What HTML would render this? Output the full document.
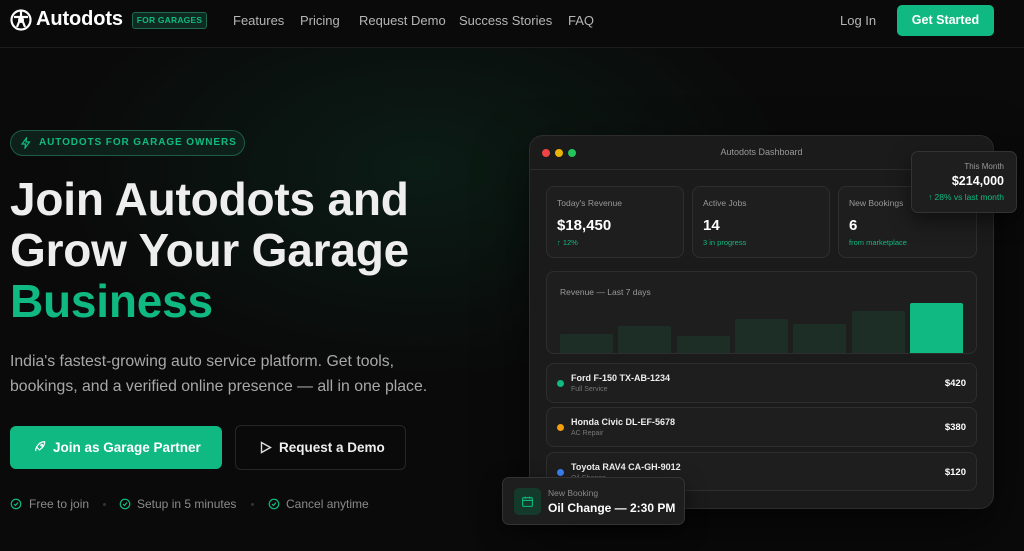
<!DOCTYPE html>
<html><head><meta charset="utf-8"><style>
*{margin:0;padding:0;box-sizing:border-box}
body{width:1024px;height:551px;overflow:hidden;background:#0a0a0a;font-family:"Liberation Sans",sans-serif;color:#fff;position:relative}
.bg{position:absolute;left:0;top:48px;width:1024px;height:503px;background:radial-gradient(ellipse 520px 300px at 420px 120px,rgba(16,120,80,0.16),transparent 70%)}
.a{position:absolute}
nav .l{position:absolute;top:13px;font-size:13px;color:#b5b5b5}
.card{position:absolute;background:#1e1e1e;border:1px solid #2e2e2e;border-radius:8px}
.sl{font-size:8.5px;color:#999;position:absolute;left:10px;top:11px}
.sv{font-size:15px;font-weight:bold;position:absolute;left:10px;top:30px}
.sg{font-size:7.5px;color:#10b981;position:absolute;left:10px;top:51px}
.bar{position:absolute;bottom:0;width:53px;background:#1d2e27;border-radius:2px 2px 0 0}
.row .d{position:absolute;left:10px;top:16px;width:7px;height:7px;border-radius:50%}
.row .t{position:absolute;left:24px;top:9px;font-size:9px;font-weight:bold;color:#eee}
.row .s{position:absolute;left:24px;top:22px;font-size:7px;color:#777}
.row .p{position:absolute;right:10px;top:14px;font-size:9.5px;font-weight:bold}
.ck{position:absolute;top:497px;font-size:12px;color:#8a8a8a;white-space:nowrap}
.ci{position:absolute;top:498px}
.dt{position:absolute;top:503px;width:3px;height:3px;border-radius:50%;background:#333}
</style></head><body>
<div class="bg"></div>
<nav>
<svg class="a" style="left:10px;top:9px" width="22" height="22" viewBox="0 0 22 22"><circle cx="11" cy="11" r="9.5" fill="none" stroke="#fff" stroke-width="2.2"/><path d="M11 2 L11 8 M11 8 L4 8 M11 8 L18 8 M7 18 L11 8 L15 18" stroke="#fff" stroke-width="2.2" fill="none"/><circle cx="11" cy="11" r="3" fill="#fff"/></svg>
<div class="a" style="left:36px;top:8px;font-size:20px;font-weight:bold;letter-spacing:-0.1px">Autodots</div>
<div class="a" style="left:132px;top:12px;width:75px;height:17px;border:1px solid #1f6b4d;background:#0f2a20;border-radius:3px;color:#10b981;font-size:8.5px;font-weight:bold;text-align:center;line-height:15px;letter-spacing:0.2px">FOR GARAGES</div>
<span class="l" style="left:233px">Features</span><span class="l" style="left:300px">Pricing</span><span class="l" style="left:359px">Request Demo</span><span class="l" style="left:459px">Success Stories</span><span class="l" style="left:568px">FAQ</span>
<span class="l" style="left:840px">Log In</span>
<div class="a" style="left:897px;top:5px;width:97px;height:31px;background:#10b981;border-radius:5px;font-size:12.5px;font-weight:bold;text-align:center;line-height:31px">Get Started</div>
</nav>
<div class="a" style="left:0;top:47px;width:1024px;height:1px;background:#1c1c1c"></div>
<div class="a" style="left:10px;top:130px;width:235px;height:26px;border:1px solid #1d5c43;background:#0d211a;border-radius:13px;color:#10b981;font-size:10px;font-weight:bold;letter-spacing:0.9px;line-height:24px;padding-left:28px">AUTODOTS FOR GARAGE OWNERS</div>
<svg class="a" style="left:20px;top:137px" width="12" height="12" viewBox="0 0 24 24"><path d="M13 2L4 14h7l-1 8 9-12h-7z" fill="none" stroke="#10b981" stroke-width="2.4"/></svg>
<div class="a" style="left:10px;top:174px;font-size:46px;font-weight:bold;line-height:51px;letter-spacing:-0.2px;color:#eee">Join Autodots and<br>Grow Your Garage<br><span style="color:#10b981">Business</span></div>
<div class="a" style="left:10px;top:350px;font-size:15.8px;line-height:24.5px;color:#a8a8a8">India's fastest-growing auto service platform. Get tools,<br>bookings, and a verified online presence — all in one place.</div>
<div class="a" style="left:10px;top:426px;width:212px;height:43px;background:#10b981;border-radius:6px;font-size:13.5px;font-weight:bold;line-height:43px;padding-left:43px">Join as Garage Partner</div>
<svg class="a" style="left:33px;top:440px" width="14" height="14" viewBox="0 0 24 24" fill="none" stroke="#fff" stroke-width="2"><path d="M5 19c-1-3 0-5 2-6M9 15l-3-3 4-5c3-3 7-4 10-4 0 3-1 7-4 10l-5 4z"/><circle cx="15" cy="9" r="1.5"/></svg>
<div class="a" style="left:235px;top:425px;width:171px;height:45px;border:1px solid #262626;border-radius:6px;font-size:13.5px;font-weight:bold;line-height:43px;padding-left:43px;color:#eee">Request a Demo</div>
<svg class="a" style="left:260px;top:441px" width="12" height="13" viewBox="0 0 12 13"><path d="M1.5 1.5L10.5 6.5 1.5 11.5z" fill="none" stroke="#ddd" stroke-width="1.4"/></svg>
<svg class="ci" style="left:10px" width="12" height="12" viewBox="0 0 24 24" fill="none" stroke="#10b981" stroke-width="2.4"><circle cx="12" cy="12" r="9.5"/><path d="M8 12l3 3 5-6"/></svg>
<span class="ck" style="left:29px">Free to join</span><div class="dt" style="left:103px"></div>
<svg class="ci" style="left:119px" width="12" height="12" viewBox="0 0 24 24" fill="none" stroke="#10b981" stroke-width="2.4"><circle cx="12" cy="12" r="9.5"/><path d="M8 12l3 3 5-6"/></svg>
<span class="ck" style="left:137px">Setup in 5 minutes</span><div class="dt" style="left:251px"></div>
<svg class="ci" style="left:268px" width="12" height="12" viewBox="0 0 24 24" fill="none" stroke="#10b981" stroke-width="2.4"><circle cx="12" cy="12" r="9.5"/><path d="M8 12l3 3 5-6"/></svg>
<span class="ck" style="left:286px">Cancel anytime</span>

<div class="a" style="left:529px;top:135px;width:465px;height:374px;background:#1b1b1b;border:1px solid #2c2c2c;border-radius:14px;box-shadow:0 20px 50px rgba(0,0,0,.6)">
 <div class="a" style="left:0;top:33px;width:463px;height:1px;background:#2c2c2c"></div>
 <div class="a" style="left:12px;top:13px;width:8px;height:8px;border-radius:50%;background:#ef4444"></div>
 <div class="a" style="left:25px;top:13px;width:8px;height:8px;border-radius:50%;background:#eab308"></div>
 <div class="a" style="left:38px;top:13px;width:8px;height:8px;border-radius:50%;background:#22c55e"></div>
 <div class="a" style="left:0;width:463px;top:11px;text-align:center;font-size:9px;color:#999">Autodots Dashboard</div>
 <div class="card" style="left:16px;top:50px;width:138px;height:72px"><div class="sl">Today's Revenue</div><div class="sv">$18,450</div><div class="sg">↑ 12%</div></div>
 <div class="card" style="left:162px;top:50px;width:138px;height:72px"><div class="sl">Active Jobs</div><div class="sv">14</div><div class="sg">3 in progress</div></div>
 <div class="card" style="left:308px;top:50px;width:139px;height:72px"><div class="sl">New Bookings</div><div class="sv">6</div><div class="sg">from marketplace</div></div>
 <div class="card" style="left:16px;top:135px;width:431px;height:83px;overflow:hidden"><div class="sl" style="left:13px;top:15px">Revenue — Last 7 days</div>
  <div class="bar" style="left:13px;height:19px"></div><div class="bar" style="left:71px;height:27px"></div><div class="bar" style="left:130px;height:17px"></div><div class="bar" style="left:188px;height:34px"></div><div class="bar" style="left:246px;height:29px"></div><div class="bar" style="left:305px;height:42px"></div><div class="bar" style="left:363px;height:50px;background:#10b981"></div></div>
 <div class="card row" style="left:16px;top:227px;width:431px;height:40px"><div class="d" style="background:#10b981"></div><div class="t">Ford F-150 TX-AB-1234</div><div class="s">Full Service</div><div class="p">$420</div></div>
 <div class="card row" style="left:16px;top:271px;width:431px;height:40px"><div class="d" style="background:#f59e0b"></div><div class="t">Honda Civic DL-EF-5678</div><div class="s">AC Repair</div><div class="p">$380</div></div>
 <div class="card row" style="left:16px;top:316px;width:431px;height:39px"><div class="d" style="background:#3b82f6"></div><div class="t">Toyota RAV4 CA-GH-9012</div><div class="s">Oil Change</div><div class="p">$120</div></div>
</div>
<div class="a" style="left:911px;top:151px;width:106px;height:62px;background:#1e1e1e;border:1px solid #333;border-radius:7px;text-align:right;padding-right:12px;box-shadow:0 8px 20px rgba(0,0,0,.5)">
 <div style="font-size:8px;color:#999;margin-top:10px">This Month</div>
 <div style="font-size:12.5px;font-weight:bold;margin-top:3px">$214,000</div>
 <div style="font-size:8.5px;color:#10b981;margin-top:4px">↑ 28% vs last month</div></div>
<div class="a" style="left:502px;top:477px;width:183px;height:48px;background:#1e1e1e;border:1px solid #333;border-radius:7px;box-shadow:0 8px 20px rgba(0,0,0,.5)">
 <div class="a" style="left:11px;top:10px;width:27px;height:27px;background:#143a2b;border-radius:5px"></div>
 <svg class="a" style="left:18px;top:17px" width="13" height="13" viewBox="0 0 24 24" fill="none" stroke="#10b981" stroke-width="2"><rect x="3" y="5" width="18" height="16" rx="2"/><path d="M3 10h18M8 3v4M16 3v4"/></svg>
 <div class="a" style="left:45px;top:10px;font-size:8.5px;color:#888">New Booking</div>
 <div class="a" style="left:45px;top:23px;font-size:12px;font-weight:bold">Oil Change — 2:30 PM</div>
</div>
</body></html>
